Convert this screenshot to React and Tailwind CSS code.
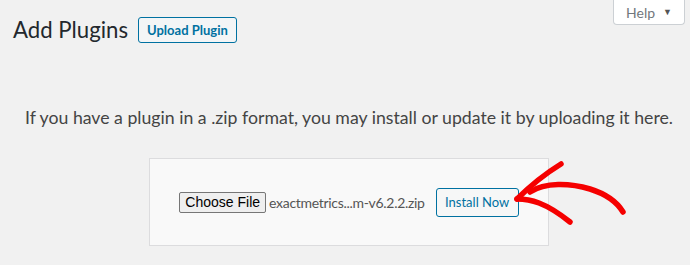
import React from 'react';

const font = { fontFamily: 'Lato, "Noto Sans", sans-serif' };

function Arrow() {
  return (
    <svg className="absolute left-0 top-0 pointer-events-none" width="690" height="265" viewBox="0 0 690 265">
      <g fill="none" stroke="#f50000" strokeWidth="5.5" strokeLinecap="round" strokeLinejoin="round">
        <path d="M561 164 C548 172 530 186 517 199" />
        <path d="M517 199 C530 199 545 202 570 222" />
        <path d="M530 192 C545 182 570 183 590 189 C606 194 617 202 623 212" />
      </g>
    </svg>
  );
}

export default function App() {
  return (
    <div className="relative w-[690px] h-[265px] bg-[#f1f1f1] overflow-hidden" style={font}>
      {/* header */}
      <div className="flex items-start justify-between">
        <div className="flex items-center gap-[10px] pl-[13px] pt-[17px]">
          <h1 className="text-[22.2px] leading-[26px] text-[#23282d] font-normal">Add Plugins</h1>
          <button className="h-[26px] px-[8px] border border-[#0071a1] rounded-[3px] bg-[#f3f5f6] text-[#0071a1] text-[13px] font-bold leading-none">
            Upload Plugin
          </button>
        </div>
        <div className="mr-[5px] w-[72px] h-[25px] bg-white border border-t-0 border-[#ccd0d4] rounded-b-[4px] flex items-center justify-center gap-[8px] text-[#72777c] text-[14px]">
          <span>Help</span>
          <span className="text-[9px] text-[#555]">▼</span>
        </div>
      </div>

      {/* description */}
      <p className="mt-[64px] text-center pl-[8px] text-[17.7px] leading-[21px] text-[#444]">
        If you have a plugin in a .zip format, you may install or update it by uploading it here.
      </p>

      {/* upload box */}
      <div className="mt-[30px] ml-[149px] w-[400px] h-[88px] bg-[#f9f9f9] border border-[#dcdcde] flex items-center justify-center">
        <div className="flex items-center">
          <span
            className="h-[21px] px-[5px] border border-[#767676] rounded-[2px] bg-[#efefef] text-[14px] leading-[19px] text-black"
            style={{ fontFamily: '"Liberation Sans", Arial, sans-serif' }}
          >
            Choose File
          </span>
          <span className="ml-[3px] text-[14px] tracking-[-0.3px] text-[#555]">exactmetrics...m-v6.2.2.zip</span>
          <button className="ml-[11px] w-[83px] h-[29px] border border-[#0071a1] rounded-[3px] bg-[#f6f7f7] text-[#0071a1] text-[13px] leading-none">
            Install Now
          </button>
        </div>
      </div>

      <Arrow />
    </div>
  );
}
